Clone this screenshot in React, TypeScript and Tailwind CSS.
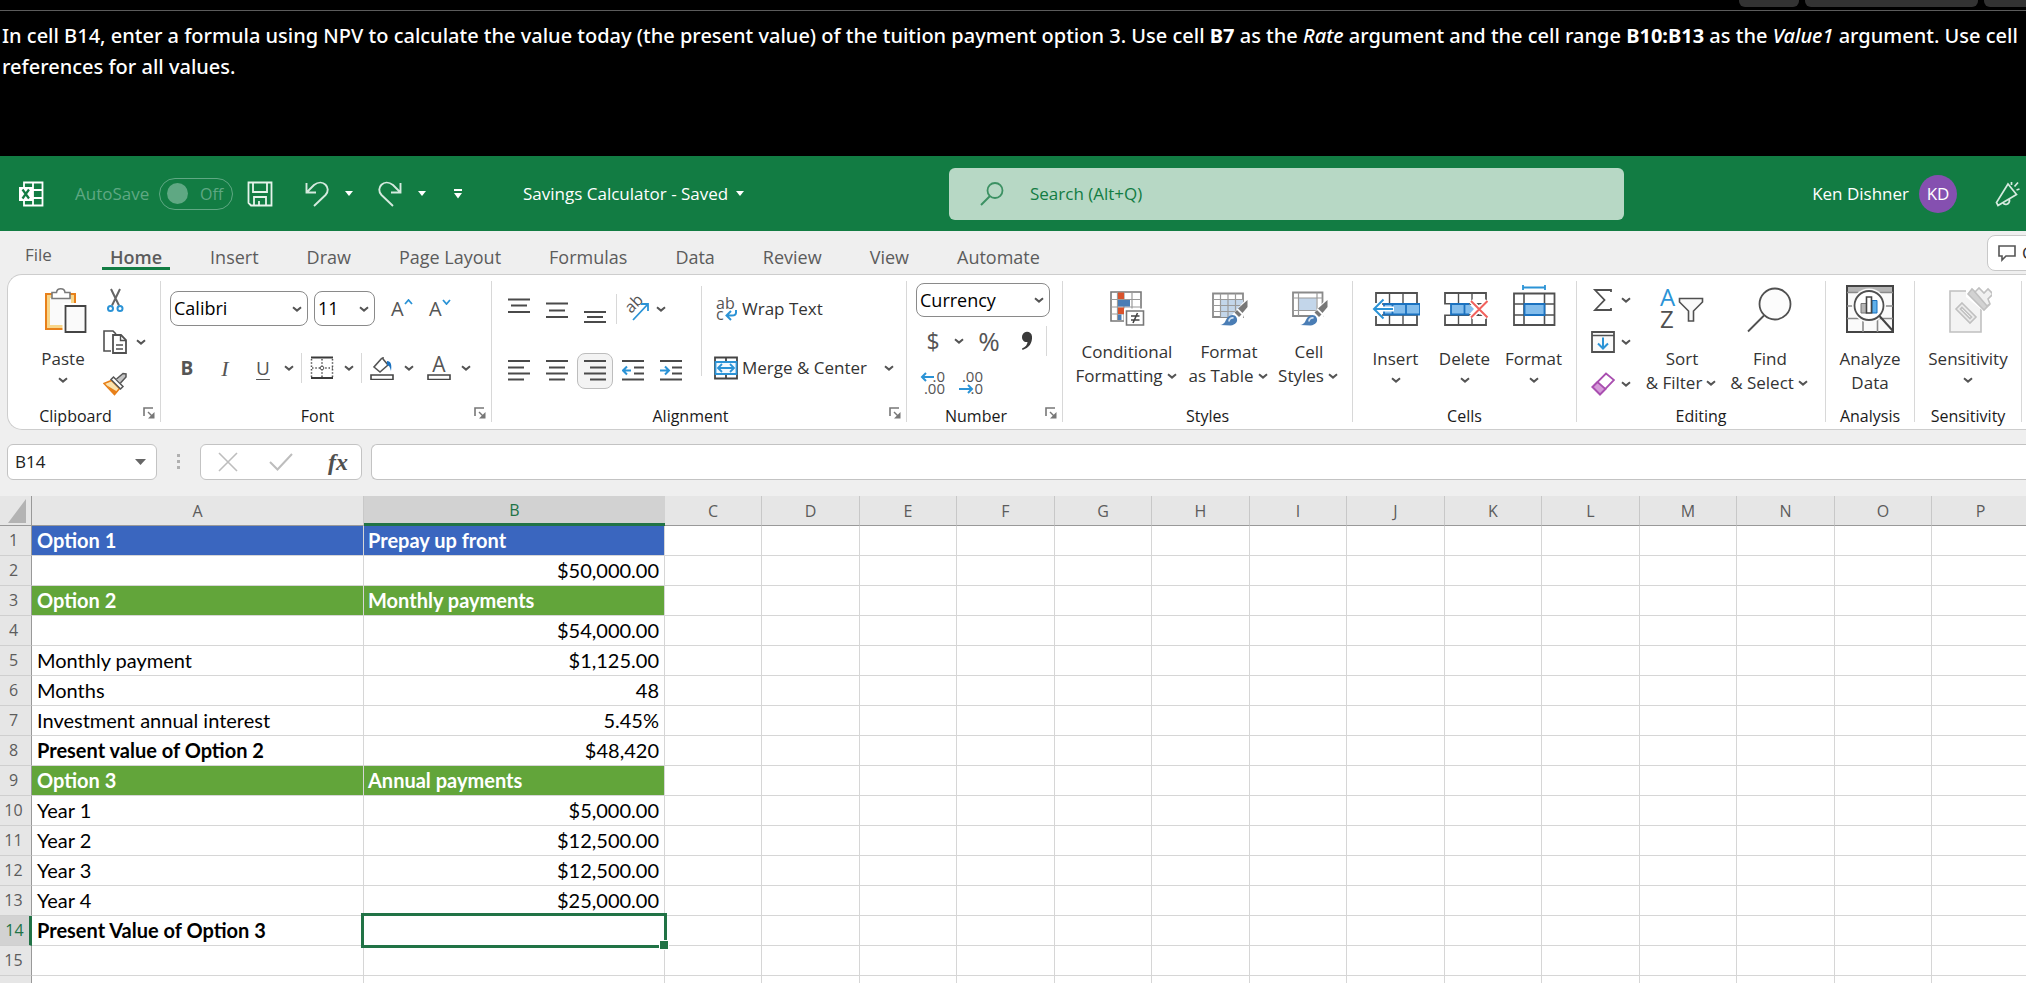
import { ReactNode, useState } from "react";
import clsx from "clsx";

const DARK = "#505050";
const BLUE = "#2b93d6";
const ORANGE = "#e8801a";

/* ---------- shared bits ---------- */

function Chevron() {
  return (
    <svg width="14" height="12" viewBox="0 0 14 12" fill="none" className="shrink-0">
      <path d="M3 4.2 7 7.6 11 4.2" stroke="#555" strokeWidth="2" />
    </svg>
  );
}

function Caret() {
  return (
    <svg width="8" height="5" viewBox="0 0 8 5" className="shrink-0">
      <path d="M0 0h8L4 5z" fill="#fff" />
    </svg>
  );
}

function MenuButton({ label }: { label: string }) {
  return (
    <button type="button" aria-label={label} className="flex h-6 w-3.5 shrink-0 items-center justify-center">
      <Chevron />
    </button>
  );
}

interface IconButtonProps {
  label: string;
  className?: string;
  children: ReactNode;
}

function IconButton({ label, className, children }: IconButtonProps) {
  return (
    <button
      type="button"
      aria-label={label}
      className={clsx("flex shrink-0 items-center justify-center", className ?? "h-9 w-[38px]")}
    >
      {children}
    </button>
  );
}

function Separator({ className }: { className: string }) {
  return <div className={clsx("w-px shrink-0 bg-[#d8d8d8]", className)} />;
}

interface SelectBoxProps {
  label: string;
  options: string[];
  className: string;
}

function SelectBox({ label, options, className }: SelectBoxProps) {
  return (
    <div className={clsx("flex items-center rounded-lg border border-[#8a8a8a] bg-white", className)}>
      <select aria-label={label} className="min-w-0 flex-1 appearance-none bg-transparent pl-[3px] text-[18px] text-black outline-none">
        {options.map((option) => (
          <option key={option}>{option}</option>
        ))}
      </select>
      <span className="pointer-events-none mr-[3px]">
        <Chevron />
      </span>
    </div>
  );
}

interface GroupProps {
  title: string;
  className: string;
  launcher?: boolean;
  children: ReactNode;
}

function Group({ title, className, launcher, children }: GroupProps) {
  return (
    <section aria-label={title} className={clsx("flex shrink-0", className)}>
      <div className="flex min-w-0 flex-1 flex-col">
        <div className="flex h-[129px] items-start">{children}</div>
        <div className="flex h-6 items-start">
          <span className="flex-1 text-center text-[16px] leading-6 text-[#1a1a1a]">{title}</span>
          {launcher && (
            <button type="button" aria-label={`${title} settings`} className="mt-[3px] w-[17px]">
              <svg width="12" height="12" viewBox="0 0 12 12" fill="none">
                <path d="M1 9V1h9" stroke="#777" strokeWidth="1.6" />
                <path d="M5 5l5 5" stroke="#777" strokeWidth="1.4" />
                <path d="M11.5 5v6.5H5z" fill="#777" />
              </svg>
            </button>
          )}
        </div>
      </div>
      <Separator className="mt-1.5 h-[141px]" />
    </section>
  );
}

interface BigButtonProps {
  icon: ReactNode;
  lines: string[];
  className: string;
  compact?: boolean;
  menu?: boolean;
}

function BigButton({ icon, lines, className, compact, menu }: BigButtonProps) {
  const last = lines.length - 1;
  return (
    <button
      type="button"
      className={clsx("mt-[9px] flex shrink-0 flex-col items-center text-[17px] leading-6 text-[#333]", className)}
    >
      <svg width="48" height="50" viewBox="0 0 48 50" fill="none" className={compact ? "mb-1.5" : "mb-[13px]"}>
        {icon}
      </svg>
      {lines.map((line, i) => (
        <span key={line} className="flex items-center whitespace-nowrap">
          {line}
          {menu && last > 0 && i === last && (
            <span className="ml-0.5">
              <Chevron />
            </span>
          )}
        </span>
      ))}
      {menu && last === 0 && (
        <span className="mt-[3px]">
          <Chevron />
        </span>
      )}
    </button>
  );
}

/* ---------- large ribbon icons, all on a 48x50 canvas ---------- */

const pasteIcon = (
  <>
    <path d="M7 10h29v35H7z" fill="#fff" stroke={ORANGE} strokeWidth="2" />
    <path d="M9.500 12.500h24v30h-24z" fill="#fafafa" stroke="#f8d68a" strokeWidth="3" />
    <path d="M13 14.500v-6h4.500c.5-5 8-5 8.500 0h5v6z" fill="#fff" stroke="#7a7a7a" strokeWidth="1.6" />
    <path d="M23.500 19H48v31H23.500z" fill="#fff" />
    <path d="M26.500 22H46.500v26H26.500z" fill="#fafafa" stroke="#444" strokeWidth="1.8" />
  </>
);

const conditionalIcon = (
  <>
    <path d="M8 8h30v29H8z" fill="#fff" stroke="#777" strokeWidth="1.6" />
    <path d="M8 15.500h30M8 23h30M8 30h30M14.500 8v29M21 8v29M29 8v29" stroke="#9a9a9a" strokeWidth="1.2" />
    <path d="M15 8.500h6v6.500h-6zM15 23.500h6V30h-6z" fill="#d9532c" />
    <path d="M15 16h12v6.500H15zM15 30.500h3.500V36H15z" fill="#4a7db5" />
    <path d="M22.500 26h18.500v15.500H22.500z" fill="#fff" stroke="#fff" strokeWidth="3" />
    <path d="M23.500 27h17v14h-17z" fill="#fff" stroke="#777" strokeWidth="1.6" />
    <path d="M28 32h8.500M28 36h8.500M34.500 29l-4.500 10" stroke="#444" strokeWidth="1.6" />
  </>
);

const brushOverlay = (
  <>
    <path d="M42 14 27 31l-8 11h12l6-6 7-17z" fill="#fff" />
    <path d="M42.500 16v7l-5 6-4.500-4.500z" fill="#777" />
    <path d="m32 26 4.500 4.500-2.500 2.500-4.500-4.500z" fill="#777" />
    <path d="M15 41c5-.5 5-4 7.500-7.500 2.500-3 7-3.500 9 0 2 4-1 7.500-6 8z" fill="#4a7db5" />
    <path d="M24 37.500c0-2.500 2-4 4.500-3.500" stroke="#cfe0f1" strokeWidth="1.8" />
  </>
);

const tableFormatIcon = (
  <>
    <path d="M8 9.500h30V33H8z" fill="#fff" stroke="#8a8a8a" strokeWidth="1.8" />
    <path d="M15.500 15.500H38V33H15.500z" fill="#c3d6ea" />
    <path d="M8 15.500h30M8 21.500h30M8 27.500h30M15.500 9.500V33M23 9.500V33M30.500 9.500V33" stroke="#9a9a9a" strokeWidth="1.2" />
    {brushOverlay}
  </>
);

const cellStylesIcon = (
  <>
    <path d="M8 8.500h29.500V32H8z" fill="#fff" stroke="#8a8a8a" strokeWidth="1.8" />
    <path d="M14 14h17.500v12.500H14z" fill="#c3d6ea" />
    <path d="M8 14h29.500M8 26.500h29.500M13.500 8.500V32M32 8.500V32" stroke="#9a9a9a" strokeWidth="1.2" />
    {brushOverlay}
  </>
);

const insertIcon = (
  <>
    <path d="M4 9h41v32H4z" fill="#fff" stroke={DARK} strokeWidth="1.8" />
    <path d="M4 20h41M4 31h41M17.500 9v11M31 9v11M17.500 31v10M31 31v10" stroke={DARK} strokeWidth="1.4" />
    <path d="M0 19h10v13H0z" fill="#fff" />
    <path d="M12 20h36v10.500H12z" fill="#83bdec" stroke="#1b72c0" strokeWidth="1.8" />
    <path d="M20.500 20v10.500M34 20v10.500" stroke="#1b72c0" strokeWidth="1.8" />
    <path d="M3 25h19" stroke="#fff" strokeWidth="5" />
    <path d="M2 25h19M11.500 15.500 2 25l9.500 9.500" stroke={BLUE} strokeWidth="2" />
  </>
);

const deleteIcon = (
  <>
    <path d="M4 9h41v11H4zM4 31h41v10H4z" fill="#fff" stroke={DARK} strokeWidth="1.8" />
    <path d="M17.500 9v11M31 9v11M17.500 31v10M31 31v10" stroke={DARK} strokeWidth="1.4" />
    <path d="M2 20.500h8v10H2zM38 20.500h9v10h-9z" fill="#fff" />
    <path d="M10 20h18l5 5-5 5.500H10z" fill="#83bdec" />
    <path d="M28 20H10v10.500h18M23.500 20v10.500" stroke="#1b72c0" strokeWidth="1.8" />
    <path d="m30 17 16.500 16.500M46.500 17 30 33.500" stroke="#fff" strokeWidth="5" />
    <path d="m30 17 16.500 16.500M46.500 17 30 33.500" stroke="#f2615c" strokeWidth="2" />
  </>
);

const formatIcon = (
  <>
    <path d="M13 3.500h22M13 1v5M35 1v5" stroke={BLUE} strokeWidth="1.8" />
    <path d="M4 9.500h40.500V41H4z" fill="#fff" stroke={DARK} strokeWidth="1.8" />
    <path d="M4 20h40.500M4 31h40.500M14 9.500V41M34.500 9.500V41" stroke={DARK} strokeWidth="1.6" />
    <path d="M14.500 20h20v11h-20z" fill="#83bdec" stroke="#1b72c0" strokeWidth="1.8" />
  </>
);

const sortIcon = (
  <>
    <text x="2" y="22" fontSize="24" fill={BLUE} fontFamily="Open Sans">A</text>
    <text x="2" y="44" fontSize="24" fill={DARK} fontFamily="Open Sans">Z</text>
    <path d="M21.500 14.500h23v3.500l-9 9v10h-5V27l-9-9z" fill="#fafafa" stroke={DARK} strokeWidth="1.6" />
  </>
);

const findIcon = (
  <>
    <circle cx="29" cy="20" r="15.500" fill="#fcfcfc" stroke={DARK} strokeWidth="1.8" />
    <path d="M18 31.500 2 47.500" stroke={DARK} strokeWidth="1.8" />
  </>
);

const analyzeIcon = (
  <>
    <path d="M1 2h46v46H1z" fill="#fafafa" stroke="#444" strokeWidth="2" />
    <path d="M2 3h44v5H2z" fill="#b5b5b5" />
    <path d="M1 8.500h46M1 22h46M1 34.500h46M17 34.500V48M31.500 34.500V48" stroke="#8a8a8a" strokeWidth="1.6" />
    <circle cx="23" cy="21.500" r="17" fill="#fafafa" />
    <circle cx="23" cy="21.500" r="14.500" fill="#fff" stroke={DARK} strokeWidth="1.8" />
    <path d="M15 19.500h5.500V29H15z" fill="#b5b5b5" stroke="#777" />
    <path d="M26 16.500h5V29h-5z" fill="#5fb0ea" stroke="#1b72c0" />
    <path d="M20.500 13h5v16h-5z" fill="#fff" stroke="#444" strokeWidth="1.6" />
    <path d="M33.500 32 47 47" stroke="#444" strokeWidth="2" />
  </>
);

const sensitivityIcon = (
  <g stroke="#c0c0c0" strokeWidth="1.6">
    <path d="M6 7h31v41H6z" fill="#f3f3f3" />
    <path d="M22 2h26v24H38L22 13z" fill="#fff" stroke="none" />
    <path d="m18 19 14 14-6 6-14-14z" fill="#ececec" />
    <path d="m18 23.500 9.500 9.500-1.500 1.500-9.500-9.500z" fill="#fff" />
    <path d="m24 10 4-5 17 16-5 5z" fill="#d2d2d2" />
    <path d="m31 8 4-4 5 5 4-4 5 5-5 5 2 5-3 2z" fill="#f0f0f0" />
  </g>
);

/* ---------- small ribbon icons ---------- */

function CutIcon() {
  return (
    <svg width="24" height="24" viewBox="0 0 24 24" fill="none">
      <path d="M8 1l8 16.500M17 1 9 17.500" stroke="#666" strokeWidth="2" />
      <circle cx="7.500" cy="20.500" r="2.500" stroke={BLUE} strokeWidth="2" />
      <circle cx="17" cy="20.500" r="2.500" stroke={BLUE} strokeWidth="2" />
    </svg>
  );
}

function CopyIcon() {
  return (
    <svg width="24" height="24" viewBox="0 0 24 24" fill="none">
      <path d="M8 21H1V1h9l3 3" stroke={DARK} strokeWidth="1.6" />
      <path d="M10 5h8l5 5v13H10z" fill="#fff" stroke={DARK} strokeWidth="1.8" />
      <path d="M17.500 5v5.500H23M13 15h7M13 19h7" stroke={DARK} strokeWidth="1.4" />
    </svg>
  );
}

function PainterIcon() {
  return (
    <svg width="24" height="24" viewBox="0 0 24 24" fill="none">
      <path d="M1 11.500 8.500 8.500l8 8L11.500 22.500z" fill="#fbe3ae" stroke={ORANGE} strokeWidth="1.600" />
      <path d="m4 13.500 10 6-2.500 3.500z" fill={ORANGE} />
      <path d="m8 7.500 2.500-2.500 9.500 9.500-2.500 2.500z" fill="#fff" stroke="#555" strokeWidth="1.500" />
      <path d="m13.500 7 6.500-5.500 3 .5v3L17.500 11" fill="#c4c4c4" stroke="#555" strokeWidth="1.500" />
    </svg>
  );
}

function BordersIcon() {
  return (
    <svg width="24" height="24" viewBox="0 0 24 24" fill="none">
      <path d="M1 1.500h22M1 22h22" stroke="#3a3a3a" strokeWidth="2" />
      <path d="M1.500 3v18M12 3v18M22.500 3v18M2 12h21" stroke="#555" strokeWidth="1.500" strokeDasharray="1.500 1.800" />
      <circle cx="12" cy="12" r="1.800" fill="#fff" stroke="#555" />
    </svg>
  );
}

function FillIcon() {
  return (
    <svg width="24" height="24" viewBox="0 0 24 24" fill="none">
      <path d="m12 2-8 9 6 5 8-7-5-6V1" stroke="#555" strokeWidth="1.6" />
      <path d="M17 5c4 0 5 4 4 10-1-4-2-6-4-6z" fill="#1b72c0" />
      <path d="M1 19h22v4.500H1z" fill="#fff" stroke="#444" strokeWidth="1.6" />
    </svg>
  );
}

function FontColorIcon() {
  return (
    <svg width="24" height="24" viewBox="0 0 24 24" fill="none">
      <text x="12" y="16" fontSize="21" textAnchor="middle" fill="#555" fontFamily="Open Sans">A</text>
      <path d="M1 19h22v4.500H1z" fill="#fff" stroke="#444" strokeWidth="1.6" />
    </svg>
  );
}

function LinesIcon({ d }: { d: string }) {
  return (
    <svg width="22" height="28" viewBox="0 0 22 28" fill="none">
      <path d={d} stroke="#4a4a4a" strokeWidth="1.800" />
    </svg>
  );
}

function IndentIcon({ right }: { right?: boolean }) {
  return (
    <svg width="22" height="28" viewBox="0 0 22 28" fill="none">
      <path d="M0 4h22M12 10.500h10M12 16.500h10M0 22.500h22" stroke="#4a4a4a" strokeWidth="1.800" />
      <path d={right ? "M0 13.500h9M5 9.500l4 4-4 4" : "M9 13.500H1M5 9.500l-4 4 4 4"} stroke={BLUE} strokeWidth="2" />
    </svg>
  );
}

function OrientationIcon() {
  return (
    <svg width="24" height="26" viewBox="0 0 24 26" fill="none">
      <text x="6" y="18" fontSize="16" fill="#555" fontFamily="Open Sans" transform="rotate(-45 6 18)">ab</text>
      <path d="M8 24 23 8M16 8h7v7" stroke={BLUE} strokeWidth="1.800" />
    </svg>
  );
}

function WrapIcon() {
  return (
    <svg width="24" height="26" viewBox="0 0 24 26" fill="none">
      <text x="2" y="13" fontSize="16" fill="#555" fontFamily="Open Sans">ab</text>
      <text x="2" y="24" fontSize="16" fill="#555" fontFamily="Open Sans">c</text>
      <path d="M22 14v2.500c0 2-2 3-4 3h-5M17 15l-4.500 4.500L17 24" stroke={BLUE} strokeWidth="2" />
    </svg>
  );
}

function MergeIcon() {
  return (
    <svg width="24" height="24" viewBox="0 0 24 24" fill="none">
      <path d="M1 1.500h22v21H1zM12 1v5M12 18v5" stroke="#444" strokeWidth="1.800" />
      <path d="M1.500 6h21v12h-21z" fill="#f2f9ff" stroke={BLUE} strokeWidth="1.800" />
      <path d="M4 12h16M8 8l-4 4 4 4M16 8l4 4-4 4" stroke={BLUE} strokeWidth="1.800" />
    </svg>
  );
}

function DecimalIcon({ less }: { less?: boolean }) {
  return (
    <svg width="26" height="26" viewBox="0 0 26 26" fill="none" fontFamily="Open Sans" fontSize="15">
      <text x="25" y="12" textAnchor="end" fill="#555">{less ? ".00" : ".0"}</text>
      <text x="25" y="24" textAnchor="end" fill="#555">{less ? ".0" : ".00"}</text>
      <path d={less ? "M1 19h13M10 15l4 4-4 4" : "M14 7H2M6 3 2 7l4 4"} stroke={BLUE} strokeWidth="2" />
    </svg>
  );
}

function SumIcon() {
  return (
    <svg width="24" height="24" viewBox="0 0 24 24" fill="none">
      <path d="M20 4V2H4l9.500 10L4 22h16v-2" stroke={DARK} strokeWidth="1.800" />
    </svg>
  );
}

function FillDownIcon() {
  return (
    <svg width="24" height="24" viewBox="0 0 24 24" fill="none">
      <path d="M1 2h22v20H1z" fill="#fafafa" stroke={DARK} strokeWidth="1.800" />
      <path d="M1 5.500h22" stroke={DARK} strokeWidth="1.500" />
      <path d="M12 7.500v11M7 13.500l5 5 5-5" stroke={BLUE} strokeWidth="2" />
    </svg>
  );
}

function EraserIcon() {
  return (
    <svg width="24" height="24" viewBox="0 0 24 24" fill="none">
      <path d="M15 1.500 23 8 9 22.500 1.500 15z" fill="#fff" stroke="#a94fb0" strokeWidth="1.800" />
      <path d="m6.500 10 8 7L9 22.500 1.500 15z" fill="#d59ad9" stroke="#a94fb0" strokeWidth="1.800" />
    </svg>
  );
}

/* ---------- page sections ---------- */

function Instructions() {
  return (
    <div className="h-[156px] shrink-0 bg-black">
      <div className="flex h-[11px] items-start justify-end gap-1.5 border-b border-[#5c5c5c]">
        <div className="h-[7px] w-[60px] rounded-b-md bg-[#333]" />
        <div className="h-[7px] w-[173px] rounded-b-md bg-[#333]" />
        <div className="h-[7px] w-[42px] rounded-bl-md bg-[#333]" />
      </div>
      <p className="pt-[9px] pl-[2px] font-['Noto_Sans',sans-serif] text-[20px] leading-[31px] font-medium text-white">
        In cell B14, enter a formula using NPV to calculate the value today (the present value) of the tuition payment
        option 3. Use cell <b className="font-bold">B7</b> as the <i>Rate</i> argument and the cell range{" "}
        <b className="font-bold">B10:B13</b> as the <i>Value1</i> argument. Use cell references for all values.
      </p>
    </div>
  );
}

function TitleBar() {
  const [autoSave, setAutoSave] = useState(false);

  return (
    <header className="flex h-[75px] shrink-0 items-center bg-[#127c43] text-[17px] text-white">
      <svg width="26" height="26" viewBox="0 0 26 26" fill="none" className="ml-[18px]">
        <path d="M6 1.500h18.500v23H6zM6 9h18.500M6 17h18.500M15 1.500v23" stroke="#fff" strokeWidth="1.800" />
        <path d="M1 6h14v14H1z" fill="#fff" />
        <path d="m4.500 8.500 6.500 9M11 8.500l-6.500 9" stroke="#127c43" strokeWidth="2.200" />
      </svg>
      <label className="ml-[31px] flex items-center text-[#5fa883]">
        <span className="w-[78px]">AutoSave</span>
        <input
          type="checkbox"
          role="switch"
          checked={autoSave}
          onChange={(e) => setAutoSave(e.target.checked)}
          className="sr-only"
        />
        <span className="ml-1.5 flex h-8 w-[74px] items-center rounded-full border border-[#5fa883] pl-[7px]">
          <span className="h-[21px] w-[21px] rounded-full bg-[#5fa883]" />
          <span className="ml-3 text-[16px]">{autoSave ? "On" : "Off"}</span>
        </span>
      </label>
      <IconButton label="Save" className="ml-3.5">
        <svg width="26" height="26" viewBox="0 0 26 26" fill="none">
          <path d="M1.500 1.500h23v23H4l-2.500-2.500zM6 1.500V11h14V1.500M7 24.500V16h12v8.500M12 24.500V20" stroke="#e6f3eb" strokeWidth="1.800" />
        </svg>
      </IconButton>
      <IconButton label="Undo" className="ml-8">
        <svg width="24" height="26" viewBox="0 0 24 26" fill="none">
          <path d="M1.500 2v9.500H11M1.500 11.500 9 4c9-7 18 3 11.500 10L9 25" stroke="#d5eadf" strokeWidth="1.900" />
        </svg>
      </IconButton>
      <IconButton label="Undo history" className="ml-4">
        <Caret />
      </IconButton>
      <IconButton label="Redo" className="ml-[25px]">
        <svg width="24" height="26" viewBox="0 0 24 26" fill="none">
          <path d="M22.500 2v9.500H13M22.500 11.500 15 4C6-3-3 7 3.500 14L15 25" stroke="#d5eadf" strokeWidth="1.900" />
        </svg>
      </IconButton>
      <IconButton label="Redo history" className="ml-4">
        <Caret />
      </IconButton>
      <IconButton label="Customize Quick Access Toolbar" className="ml-[27px]">
        <svg width="10" height="10" viewBox="0 0 10 10">
          <path d="M1 0h8v2H1zM1 4h8L5 9.500z" fill="#fff" />
        </svg>
      </IconButton>
      <button type="button" className="ml-[60px] flex w-[426px] items-center gap-2 whitespace-nowrap">
        Savings Calculator - Saved
        <Caret />
      </button>
      <label className="flex h-[52px] w-[675px] items-center rounded-md bg-[#b7d8c5] pl-[31px]">
        <svg width="24" height="24" viewBox="0 0 24 24" fill="none" className="shrink-0">
          <circle cx="15" cy="8.500" r="7.500" stroke="#3c9163" strokeWidth="1.800" />
          <path d="M10 14 1 23" stroke="#3c9163" strokeWidth="2" />
        </svg>
        <input
          type="search"
          aria-label="Search"
          placeholder="Search (Alt+Q)"
          className="ml-[26px] min-w-0 flex-1 bg-transparent text-[#127c43] outline-none placeholder:text-[#127c43] placeholder:opacity-100"
        />
      </label>
      <div className="ml-auto flex items-center">
        <span className="whitespace-nowrap">Ken Dishner</span>
        <button type="button" aria-label="Account" className="ml-2.5 h-[38px] w-[38px] rounded-full bg-[#8550b0] text-[17px]">
          KD
        </button>
        <IconButton label="Coming soon" className="mr-1.5 ml-[38px]">
          <svg width="25" height="26" viewBox="0 0 25 26" fill="none" stroke="#d5eadf" strokeWidth="1.700">
            <path d="M13 3 1.500 21.500 3 24.500 21.500 13.500zM8 21.500c1.500 3.500 7 2 6.500-3M16.500 4V1M19.500 5.500 23 1.500M21.500 9l3-1" />
          </svg>
        </IconButton>
      </div>
    </header>
  );
}

const TABS = ["Home", "Insert", "Draw", "Page Layout", "Formulas", "Data", "Review", "View", "Automate"];

function Tabs() {
  return (
    <nav className="flex h-[43px] shrink-0 items-start overflow-hidden bg-[#efefef] text-[18px] text-[#5c5c5c]">
      <button type="button" className="ml-[25px] h-12 w-[77px] text-left text-[17px]">
        File
      </button>
      <div className="flex gap-8">
        {TABS.map((tab) => (
          <button key={tab} type="button" className="flex flex-col px-2 pt-[13px] whitespace-nowrap">
            <span className={clsx("leading-[26px]", tab === "Home" && "font-semibold")}>{tab}</span>
            {tab === "Home" && <span className="-mx-2 -mt-[3px] h-[3px] self-stretch bg-[#127c43]" />}
          </button>
        ))}
      </div>
      <button
        type="button"
        className="mt-1 -mr-[93px] ml-auto flex h-9 w-[132px] shrink-0 items-center rounded-lg border border-[#c8c8c8] bg-white pl-2.5 text-[17px] text-[#333]"
      >
        <svg width="18" height="18" viewBox="0 0 18 18" fill="none" className="mr-1.5 shrink-0">
          <path d="M1 2h16v10H8l-4 4v-4H1z" stroke="#555" strokeWidth="1.600" />
        </svg>
        Comments
      </button>
    </nav>
  );
}

function Ribbon() {
  return (
    <div className="bg-[#efefef] pl-[7px]">
      <div className="flex h-[156px] overflow-hidden rounded-l-[15px] border border-r-0 border-[#cdcdcd] bg-white">
        <Group title="Clipboard" className="w-[153px]" launcher>
          <BigButton icon={pasteIcon} lines={["Paste"]} menu className="ml-[27px] w-14" />
          <div className="mt-[13px] ml-3 flex flex-col gap-[18px]">
            <IconButton label="Cut" className="h-6 w-6">
              <CutIcon />
            </IconButton>
            <div className="flex gap-[7px]">
              <IconButton label="Copy" className="h-6 w-6">
                <CopyIcon />
              </IconButton>
              <MenuButton label="Copy options" />
            </div>
            <IconButton label="Format Painter" className="h-6 w-6">
              <PainterIcon />
            </IconButton>
          </div>
        </Group>

        <Group title="Font" className="w-[331px]" launcher>
          <div className="mt-4">
            <div className="ml-[9px] flex items-center">
              <SelectBox label="Font" options={["Calibri", "Arial"]} className="h-[35px] w-[138px]" />
              <SelectBox label="Font size" options={["11", "12", "14"]} className="ml-1.5 h-[35px] w-[61px]" />
              <button type="button" aria-label="Increase font size" className="ml-4 flex w-6 text-[20px] text-[#555]">
                A
                <svg width="9" height="6" viewBox="0 0 9 6" fill="none" className="mt-[5px] shrink-0">
                  <path d="m1 5 3.500-4L8 5" stroke={BLUE} strokeWidth="1.800" />
                </svg>
              </button>
              <button type="button" aria-label="Decrease font size" className="ml-3.5 flex w-6 text-[20px] text-[#555]">
                A
                <svg width="9" height="6" viewBox="0 0 9 6" fill="none" className="mt-[5px] shrink-0">
                  <path d="m1 1 3.500 4L8 1" stroke={BLUE} strokeWidth="1.800" />
                </svg>
              </button>
            </div>
            <div className="mt-6 ml-[7px] flex items-center text-[#555]">
              <IconButton label="Bold">
                <b className="text-[19px]">B</b>
              </IconButton>
              <IconButton label="Italic">
                <i className="font-['Liberation_Serif',serif] text-[22px]">I</i>
              </IconButton>
              <IconButton label="Underline">
                <span className="text-[19px] underline underline-offset-4">U</span>
              </IconButton>
              <MenuButton label="Underline options" />
              <Separator className="mr-2 ml-[5px] h-[30px]" />
              <IconButton label="Borders" className="h-6 w-6">
                <BordersIcon />
              </IconButton>
              <span className="ml-2 flex">
                <MenuButton label="Border options" />
              </span>
              <Separator className="mr-2 ml-[5px] h-[30px]" />
              <IconButton label="Fill color" className="h-6 w-6">
                <FillIcon />
              </IconButton>
              <span className="ml-2 flex">
                <MenuButton label="Fill color options" />
              </span>
              <IconButton label="Font color" className="ml-[11px] h-6 w-6">
                <FontColorIcon />
              </IconButton>
              <span className="ml-2 flex">
                <MenuButton label="Font color options" />
              </span>
            </div>
          </div>
        </Group>

        <Group title="Alignment" className="w-[415px]" launcher>
          <div className="mt-4 ml-2 w-[201px]">
            <div className="flex items-center">
              <IconButton label="Top align">
                <LinesIcon d="M0 4.500h22M3 10.500h16M0 17h22" />
              </IconButton>
              <IconButton label="Middle align">
                <LinesIcon d="M0 8.500h22M3 15.500h16M0 22h22" />
              </IconButton>
              <IconButton label="Bottom align">
                <LinesIcon d="M0 17h22M3 22h16M0 27h22" />
              </IconButton>
              <Separator className="mr-2 ml-0.5 h-[30px]" />
              <IconButton label="Orientation" className="h-6 w-6">
                <OrientationIcon />
              </IconButton>
              <span className="ml-[5px] flex">
                <MenuButton label="Orientation options" />
              </span>
            </div>
            <div className="mt-[26px] flex items-center">
              <IconButton label="Align left">
                <LinesIcon d="M0 4h22M0 10.500h16M0 16.500h22M0 22.500h16" />
              </IconButton>
              <IconButton label="Center">
                <LinesIcon d="M0 4h22M3 10.500h16M0 16.500h22M3 22.500h16" />
              </IconButton>
              <IconButton label="Align right" className="mx-px h-9 w-9 rounded-lg border border-[#bdbdbd] bg-[#f3f3f3]">
                <LinesIcon d="M0 4h22M6 10.500h16M0 16.500h22M6 22.500h16" />
              </IconButton>
              <IconButton label="Decrease indent">
                <IndentIcon />
              </IconButton>
              <IconButton label="Increase indent">
                <IndentIcon right />
              </IconButton>
            </div>
          </div>
          <Separator className="mt-[11px] h-[90px]" />
          <div className="mt-4 ml-3 text-[17px] text-[#333]">
            <button type="button" className="flex h-9 items-center gap-1">
              <WrapIcon />
              Wrap Text
            </button>
            <div className="mt-[23px] flex items-center">
              <button type="button" className="flex h-9 w-[168px] items-center gap-1 whitespace-nowrap">
                <MergeIcon />
                Merge &amp; Center
              </button>
              <MenuButton label="Merge options" />
            </div>
          </div>
        </Group>

        <Group title="Number" className="w-[156px]" launcher>
          <div className="mt-2 ml-[7px]">
            <SelectBox label="Number format" options={["Currency", "General"]} className="ml-0.5 h-[34px] w-[134px]" />
            <div className="mt-2 flex items-center text-[#555]">
              <IconButton label="Accounting format" className="h-8 w-[38px] text-[23px]">
                $
              </IconButton>
              <MenuButton label="Accounting options" />
              <IconButton label="Percent style" className="ml-1 h-8 w-[38px] text-[26px]">
                %
              </IconButton>
              <IconButton label="Comma style" className="h-8 w-[38px]">
                <svg width="12" height="20" viewBox="0 0 12 20">
                  <path d="M1 6a5 5 0 0 1 10-.500C11.500 12 8 17 1.500 19l-.500-1.500C4.500 16 6.500 13.500 6.500 11 3 11.500 1 9 1 6z" fill="#3a3a3a" />
                </svg>
              </IconButton>
              <Separator className="h-[30px]" />
            </div>
            <div className="mt-2 flex">
              <IconButton label="Increase decimal">
                <DecimalIcon />
              </IconButton>
              <IconButton label="Decrease decimal">
                <DecimalIcon less />
              </IconButton>
            </div>
          </div>
        </Group>

        <Group title="Styles" className="w-[290px]">
          <BigButton icon={conditionalIcon} lines={["Conditional", "Formatting"]} compact menu className="ml-[9px] w-[110px]" />
          <BigButton icon={tableFormatIcon} lines={["Format", "as Table"]} compact menu className="w-[94px]" />
          <BigButton icon={cellStylesIcon} lines={["Cell", "Styles"]} compact menu className="w-[66px]" />
        </Group>

        <Group title="Cells" className="w-[224px]">
          <BigButton icon={insertIcon} lines={["Insert"]} menu className="ml-2 w-[69px]" />
          <BigButton icon={deleteIcon} lines={["Delete"]} menu className="w-[69px]" />
          <BigButton icon={formatIcon} lines={["Format"]} menu className="w-[69px]" />
        </Group>

        <Group title="Editing" className="w-[249px]">
          <div className="mt-[13px] ml-3.5 flex w-[49px] flex-col gap-[18px]">
            <div className="flex gap-1">
              <IconButton label="AutoSum" className="h-6 w-6">
                <SumIcon />
              </IconButton>
              <MenuButton label="AutoSum options" />
            </div>
            <div className="flex gap-1">
              <IconButton label="Fill" className="h-6 w-6">
                <FillDownIcon />
              </IconButton>
              <MenuButton label="Fill options" />
            </div>
            <div className="flex gap-1">
              <IconButton label="Clear" className="h-6 w-6">
                <EraserIcon />
              </IconButton>
              <MenuButton label="Clear options" />
            </div>
          </div>
          <BigButton icon={sortIcon} lines={["Sort", "& Filter"]} menu className="w-[84px]" />
          <BigButton icon={findIcon} lines={["Find", "& Select"]} menu className="ml-0.5 w-[88px]" />
        </Group>

        <Group title="Analysis" className="w-[89px]">
          <BigButton icon={analyzeIcon} lines={["Analyze", "Data"]} className="w-full" />
        </Group>

        <Group title="Sensitivity" className="w-[107px]">
          <BigButton icon={sensitivityIcon} lines={["Sensitivity"]} menu className="w-full" />
        </Group>
      </div>
    </div>
  );
}

function FormulaBar() {
  return (
    <div className="flex h-[66px] shrink-0 items-start bg-[#efefef] pt-3.5 pl-[7px]">
      <div className="flex h-9 w-[150px] items-center rounded-md border border-[#c3c3c3] bg-white pr-2.5">
        <input aria-label="Name box" defaultValue="B14" className="min-w-0 flex-1 bg-transparent pl-[7px] text-[17px] text-[#222] outline-none" />
        <svg width="11" height="6" viewBox="0 0 11 6">
          <path d="M0 0h11L5.500 6z" fill="#666" />
        </svg>
      </div>
      <svg width="4" height="16" viewBox="0 0 4 16" className="mt-2.5 ml-5">
        <path d="M0 0h3v3H0zM0 6h3v3H0zM0 12h3v3H0z" fill="#b0b0b0" />
      </svg>
      <div className="ml-[19px] flex h-9 w-[162px] items-center rounded-md border border-[#c3c3c3] bg-white">
        <IconButton label="Cancel" className="ml-[17px]">
          <svg width="20" height="20" viewBox="0 0 20 20" fill="none">
            <path d="m1 1 18 18M19 1 1 19" stroke="#bdbdbd" strokeWidth="1.600" />
          </svg>
        </IconButton>
        <IconButton label="Enter" className="ml-[31px]">
          <svg width="24" height="18" viewBox="0 0 24 18" fill="none">
            <path d="m1 9 7.500 7.500L23 1" stroke="#bdbdbd" strokeWidth="2" />
          </svg>
        </IconButton>
        <button
          type="button"
          aria-label="Insert function"
          className="ml-[35px] font-['Liberation_Serif',serif] text-[24px] leading-8 font-bold text-[#505050] italic"
        >
          fx
        </button>
      </div>
      <input
        aria-label="Formula"
        className="ml-[9px] h-9 min-w-0 flex-1 rounded-l-md border border-r-0 border-[#c3c3c3] bg-white px-2 text-[17px] outline-none"
      />
    </div>
  );
}

interface RowData {
  a?: string;
  b?: string;
  tone?: "blue" | "green" | "bold";
}

const ROWS: RowData[] = [
  { a: "Option 1", b: "Prepay up front", tone: "blue" },
  { b: "$50,000.00" },
  { a: "Option 2", b: "Monthly payments", tone: "green" },
  { b: "$54,000.00" },
  { a: "Monthly payment", b: "$1,125.00" },
  { a: "Months", b: "48" },
  { a: "Investment annual interest", b: "5.45%" },
  { a: "Present value of Option 2", b: "$48,420", tone: "bold" },
  { a: "Option 3", b: "Annual payments", tone: "green" },
  { a: "Year 1", b: "$5,000.00" },
  { a: "Year 2", b: "$12,500.00" },
  { a: "Year 3", b: "$12,500.00" },
  { a: "Year 4", b: "$25,000.00" },
  { a: "Present Value of Option 3", tone: "bold" },
  {},
  {},
];

const EXTRA_COLUMNS = "CDEFGHIJKLMNOP".split("");
const SELECTED_ROW = 14;

function Sheet() {
  return (
    <div className="min-h-0 flex-1 overflow-hidden bg-white">
      <table className="w-max table-fixed border-separate border-spacing-0">
        <colgroup>
          <col className="w-8" />
          <col className="w-[332px]" />
          <col className="w-[301px]" />
          {EXTRA_COLUMNS.map((name, i) => (
            <col key={name} className={i % 2 ? "w-[98px]" : "w-[97px]"} />
          ))}
        </colgroup>
        <thead className="text-[16px] text-[#5c5c5c]">
          <tr className="h-[30px]">
            <th className="border-r border-b border-[#999] bg-[#e6e6e6] p-0">
              <svg width="18" height="24" viewBox="0 0 18 24" className="ml-2">
                <path d="M18 0v24H0z" fill="#b3b3b3" />
              </svg>
            </th>
            <th className="border-r border-b border-r-[#c8c8c8] border-b-[#999] bg-[#e6e6e6] p-0 font-normal">A</th>
            <th className="border-b-3 border-[#217346] bg-[#d2d2d2] p-0 font-normal text-[#217346]">B</th>
            {EXTRA_COLUMNS.map((name) => (
              <th key={name} className="border-r border-b border-r-[#c8c8c8] border-b-[#999] bg-[#e6e6e6] p-0 font-normal">
                {name}
              </th>
            ))}
          </tr>
        </thead>
        <tbody className="font-[Lato,sans-serif] text-[20px] text-black">
          {ROWS.map((row, i) => {
            const number = i + 1;
            const selected = number === SELECTED_ROW;
            const heading = row.tone === "blue" || row.tone === "green";
            const tone = clsx(
              row.tone === "blue" && "bg-[#3a66bf] font-bold text-white",
              row.tone === "green" && "bg-[#62a53a] font-bold text-white",
            );
            return (
              <tr key={number} className="h-[30px]">
                <th
                  className={clsx(
                    "border-b border-b-[#cfcfcf] p-0 text-center font-['Open_Sans',sans-serif] text-[16px] leading-[29px] font-normal",
                    selected
                      ? "border-r-3 border-r-[#217346] bg-[#d2d2d2] text-[#217346]"
                      : "border-r border-r-[#999] bg-[#e6e6e6] pr-1 text-[#5c5c5c]",
                  )}
                >
                  {number}
                </th>
                <td
                  className={clsx(
                    "border-r border-b border-[#d6d6d6] p-0 pl-[5px] leading-[29px]",
                    tone,
                    row.tone === "bold" && "font-bold",
                  )}
                >
                  {row.a}
                </td>
                <td
                  className={clsx(
                    "border-r border-b border-[#d6d6d6] p-0 leading-[29px]",
                    tone,
                    heading ? "pl-1" : "pr-[5px] text-right",
                    selected && "relative",
                  )}
                >
                  {row.b}
                  {selected && (
                    <>
                      <span className="absolute -inset-[3px] border-3 border-[#217346]" />
                      <span className="absolute -right-[5px] -bottom-[5px] h-2.5 w-2.5 border border-white bg-[#217346]" />
                    </>
                  )}
                </td>
                {EXTRA_COLUMNS.map((name) => (
                  <td key={name} className="border-r border-b border-[#d6d6d6] p-0" />
                ))}
              </tr>
            );
          })}
        </tbody>
      </table>
    </div>
  );
}

export default function App() {
  return (
    <div className="flex h-screen flex-col overflow-hidden bg-[#efefef] font-['Open_Sans',sans-serif]">
      <Instructions />
      <TitleBar />
      <Tabs />
      <Ribbon />
      <FormulaBar />
      <Sheet />
    </div>
  );
}
